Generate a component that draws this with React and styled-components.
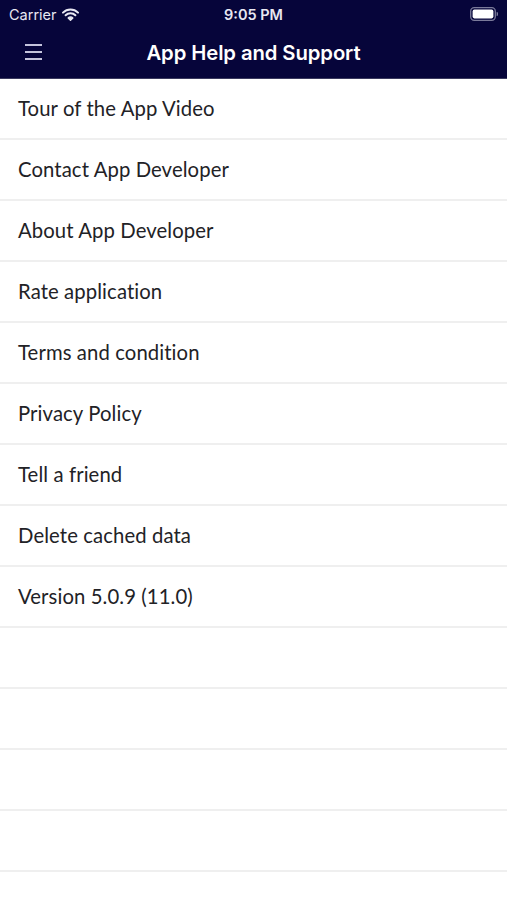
import React from "react";
import styled, { createGlobalStyle } from "styled-components";

const Global = createGlobalStyle`
  html, body { margin: 0; padding: 0; background: #ffffff; }
  #root { min-height: 100vh; }
`;

const Screen = styled.div`
  width: 507px;
  height: 900px;
  overflow: hidden;
  background: #ffffff;
  display: flex;
  flex-direction: column;
`;

const Top = styled.header`
  flex-shrink: 0;
  background: #06053a;
  height: 79px;
  display: flex;
  flex-direction: column;
  border-bottom: 1px solid #3a3a5e;
  box-sizing: border-box;
`;

const StatusBar = styled.div`
  height: 28px;
  display: grid;
  grid-template-columns: 1fr auto 1fr;
  align-items: center;
  padding: 0 9px 0 9px;
  color: #e8e8f2;
  font-family: "Inter", "Liberation Sans", sans-serif;
`;

const Carrier = styled.div`
  display: flex;
  align-items: center;
  gap: 5px;
  font-size: 14.5px;
  font-weight: 400;
`;

const Clock = styled.div`
  font-size: 14.5px;
  font-weight: 600;
`;

const BatteryWrap = styled.div`
  justify-self: end;
  display: flex;
  align-items: center;
`;

const NavBar = styled.div`
  flex: 1;
  display: grid;
  grid-template-columns: 60px 1fr 60px;
  align-items: center;
  padding-bottom: 2px;
`;

const MenuButton = styled.div`
  padding-left: 25px;
  display: flex;
  flex-direction: column;
  gap: 5.5px;
`;

const MenuLine = styled.span`
  display: block;
  width: 17px;
  height: 1.6px;
  background: #c4c4dc;
`;

const Title = styled.h1`
  margin: 0;
  text-align: center;
  color: #ffffff;
  font-family: "Inter", "Liberation Sans", sans-serif;
  font-size: 20.3px;
  font-weight: 600;
  letter-spacing: -0.1px;
`;

const List = styled.ul`
  list-style: none;
  margin: 0;
  padding: 0;
  flex-shrink: 0;
`;

const Row = styled.li`
  height: 61px;
  box-sizing: border-box;
  border-bottom: 2px solid #efefef;
  display: flex;
  align-items: center;
  padding: 0 18px;
  padding-bottom: 1px;
  font-family: "Lato", "Noto Sans", sans-serif;
  font-size: 20.3px;
  color: #222226;
  letter-spacing: 0.1px;
`;

const items = [
  "Tour of the App Video",
  "Contact App Developer",
  "About App Developer",
  "Rate application",
  "Terms and condition",
  "Privacy Policy",
  "Tell a friend",
  "Delete cached data",
  "Version 5.0.9 (11.0)",
  "",
  "",
  "",
  "",
  "",
];

function Wifi() {
  return (
    <svg width="17" height="13" viewBox="0 0 17 13">
      <path d="M1 4.6a10.6 10.6 0 0 1 15 0" stroke="#e8e8f2" strokeWidth="2" fill="none" strokeLinecap="round" />
      <path d="M3.6 7.3a6.9 6.9 0 0 1 9.8 0" stroke="#e8e8f2" strokeWidth="2" fill="none" strokeLinecap="round" />
      <path d="M6.2 9.9a3.1 3.1 0 0 1 4.6 0L8.5 12.3z" fill="#e8e8f2" stroke="#e8e8f2" strokeWidth="1.4" strokeLinejoin="round" />
    </svg>
  );
}

function Battery() {
  return (
    <svg width="28" height="14" viewBox="0 0 28 14">
      <rect x="0.7" y="0.7" width="24.6" height="12.6" rx="3.5" fill="none" stroke="#7a7a9a" strokeWidth="1.3" />
      <rect x="2.6" y="2.6" width="20.8" height="8.8" rx="1.8" fill="#ffffff" />
      <path d="M26.6 5v4a2 2 0 0 0 0-4z" fill="#7a7a9a" />
    </svg>
  );
}

export default function App() {
  return (
    <Screen>
      <Global />
      <Top>
        <StatusBar>
          <Carrier>
            Carrier <Wifi />
          </Carrier>
          <Clock>9:05 PM</Clock>
          <BatteryWrap>
            <Battery />
          </BatteryWrap>
        </StatusBar>
        <NavBar>
          <MenuButton>
            <MenuLine />
            <MenuLine />
            <MenuLine />
          </MenuButton>
          <Title>App Help and Support</Title>
          <div />
        </NavBar>
      </Top>
      <List>
        {items.map((t, i) => (
          <Row key={i}>{t}</Row>
        ))}
      </List>
    </Screen>
  );
}
